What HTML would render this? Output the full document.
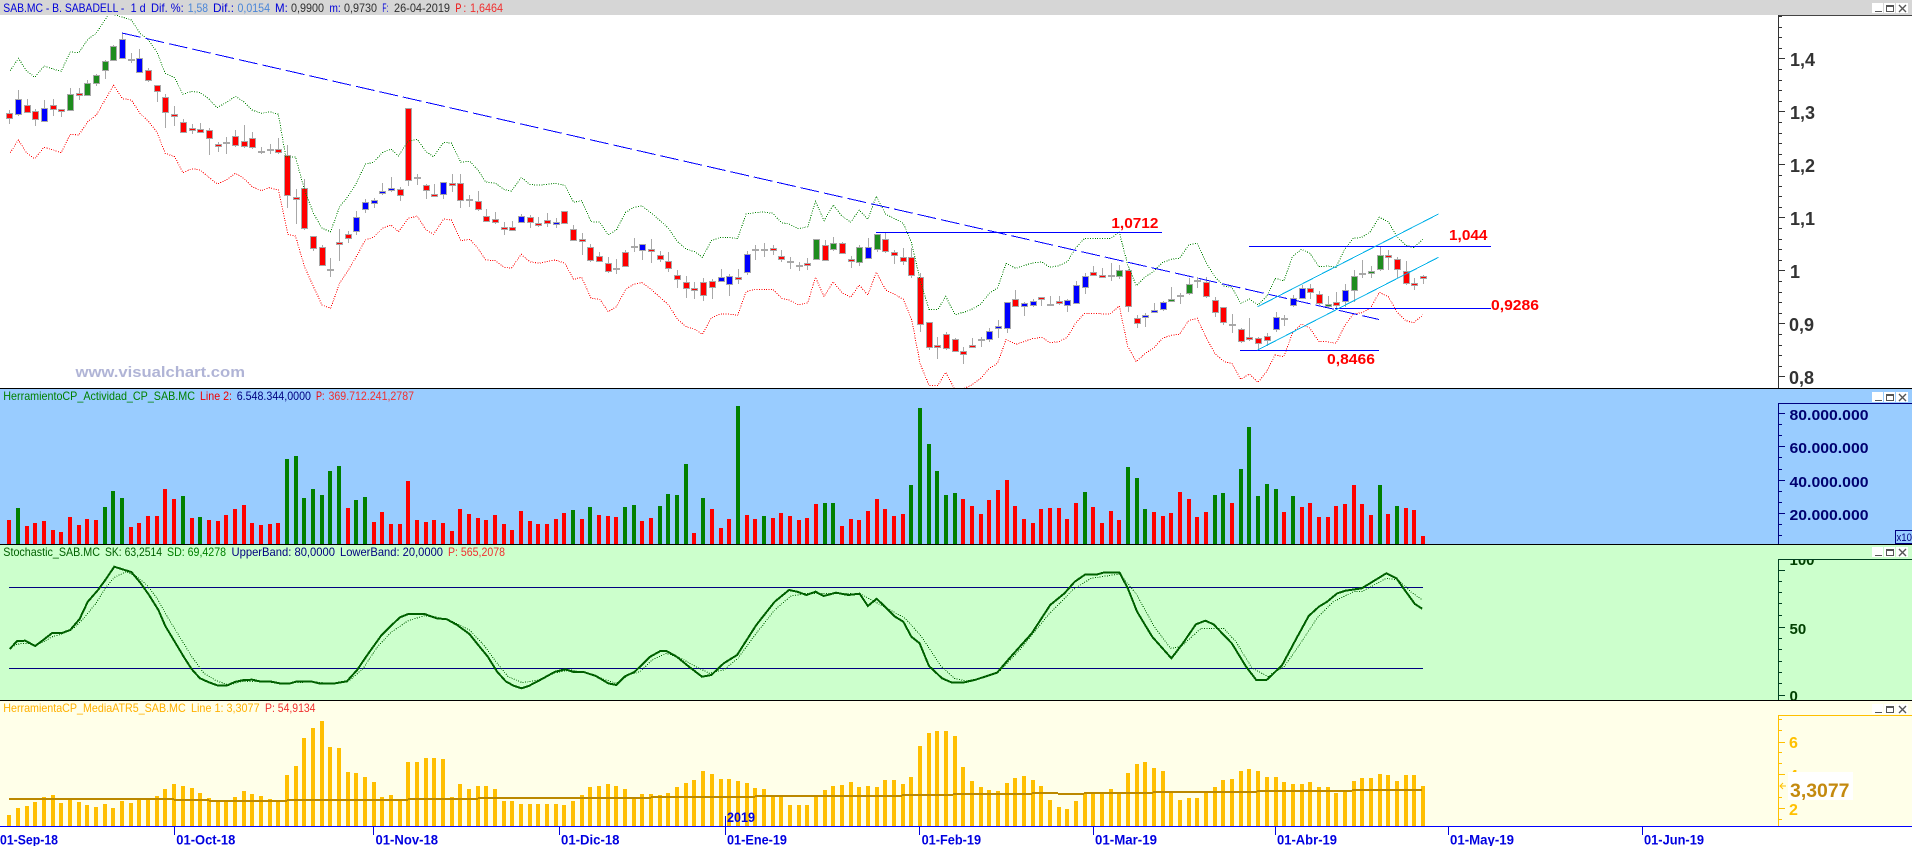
<!DOCTYPE html>
<html><head><meta charset="utf-8"><title>SAB.MC</title>
<style>
html,body{margin:0;padding:0;background:#fff;overflow:hidden}
svg{display:block}
text{font-family:"Liberation Sans",sans-serif}
.t{font-size:12px}
.a{font-size:18px;font-weight:bold;fill:#333}
.l{font-size:15px;font-weight:bold;fill:#f00}
.n{font-size:15px;font-weight:bold;fill:#000070}
.g{font-size:15px;font-weight:bold;fill:#004000}
.y{font-size:16px;font-weight:bold;fill:#ffc000}
.d{font-size:14px;font-weight:bold;fill:#0000e0}
</style></head><body>
<svg id="s" xmlns="http://www.w3.org/2000/svg" width="1912" height="846" viewBox="0 0 1912 846">
<defs><clipPath id="cg"><rect x="1779" y="560" width="133" height="140"/></clipPath></defs>
<rect width="1912" height="846" fill="#fff"/>
<g id="p1"></g>
<rect x="0" y="0" width="1912" height="15" fill="#d6d6d6"/>
<rect x="1778" y="15" width="134" height="1" fill="#444"/>
<g id="ax1"></g>
<text class="a" x="1790" y="66">1,4</text>
<text class="a" x="1790" y="119">1,3</text>
<text class="a" x="1790" y="172">1,2</text>
<text class="a" x="1790" y="225">1,1</text>
<text class="a" x="1790" y="278">1</text>
<text class="a" x="1789" y="331">0,9</text>
<text class="a" x="1789" y="384">0,8</text>
<text class="l" x="1111.4" y="228" textLength="47" lengthAdjust="spacingAndGlyphs">1,0712</text>
<text class="l" x="1449" y="240" textLength="38.5" lengthAdjust="spacingAndGlyphs">1,044</text>
<text class="l" x="1491" y="310" textLength="48" lengthAdjust="spacingAndGlyphs">0,9286</text>
<text class="l" x="1327" y="364" textLength="48" lengthAdjust="spacingAndGlyphs">0,8466</text>
<text x="75.5" y="377" font-size="15" font-weight="bold" fill="#b0b4d6" textLength="169.5" lengthAdjust="spacingAndGlyphs">www.visualchart.com</text>
<g class="t">
<text x="3.3" y="12" fill="#0000d8" textLength="121" lengthAdjust="spacingAndGlyphs">SAB.MC - B. SABADELL -</text>
<text x="130.6" y="12" fill="#0000d8" textLength="15" lengthAdjust="spacingAndGlyphs">1 d</text>
<text x="151" y="12" fill="#0000d8" textLength="32.7" lengthAdjust="spacingAndGlyphs">Dif. %:</text>
<text x="187.8" y="12" fill="#4a86d8" textLength="20.2" lengthAdjust="spacingAndGlyphs">1,58</text>
<text x="213" y="12" fill="#0000d8" textLength="21" lengthAdjust="spacingAndGlyphs">Dif.:</text>
<text x="237.5" y="12" fill="#4a86d8" textLength="32.5" lengthAdjust="spacingAndGlyphs">0,0154</text>
<text x="275" y="12" fill="#0000d8" textLength="12.8" lengthAdjust="spacingAndGlyphs">M:</text>
<text x="291" y="12" fill="#303030" textLength="33" lengthAdjust="spacingAndGlyphs">0,9900</text>
<text x="329.4" y="12" fill="#0000d8" textLength="11.4" lengthAdjust="spacingAndGlyphs">m:</text>
<text x="344" y="12" fill="#303030" textLength="33" lengthAdjust="spacingAndGlyphs">0,9730</text>
<text x="382.4" y="12" fill="#0000d8" textLength="6" lengthAdjust="spacingAndGlyphs">F:</text>
<text x="394" y="12" fill="#303030" textLength="56" lengthAdjust="spacingAndGlyphs">26-04-2019</text>
<text x="455.5" y="12" fill="#f00000" textLength="10.5" lengthAdjust="spacingAndGlyphs">P :</text>
<text x="470" y="12" fill="#f03030" textLength="33" lengthAdjust="spacingAndGlyphs">1,6464</text>
</g>

<rect x="0" y="388" width="1912" height="1" fill="#000"/>
<rect x="0" y="389" width="1912" height="155" fill="#99ccff"/>
<g id="p2"></g>
<g class="t">
<text x="3.3" y="400" fill="#008000" textLength="191.7" lengthAdjust="spacingAndGlyphs">HerramientoCP_Actividad_CP_SAB.MC</text>
<text x="200" y="400" fill="#f00000" textLength="32" lengthAdjust="spacingAndGlyphs">Line 2:</text>
<text x="236.7" y="400" fill="#000080" textLength="74.3" lengthAdjust="spacingAndGlyphs">6.548.344,0000</text>
<text x="316" y="400" fill="#f00000" textLength="8.5" lengthAdjust="spacingAndGlyphs">P:</text>
<text x="328.5" y="400" fill="#f03030" textLength="85.5" lengthAdjust="spacingAndGlyphs">369.712.241,2787</text>
</g>
<rect x="1778" y="403" width="134" height="1" fill="#000080"/>
<rect x="1778" y="403" width="1" height="141" fill="#000080"/>
<g id="ax2"></g>
<text class="n" x="1789.5" y="420" textLength="79" lengthAdjust="spacingAndGlyphs">80.000.000</text>
<text class="n" x="1789.5" y="453" textLength="79" lengthAdjust="spacingAndGlyphs">60.000.000</text>
<text class="n" x="1789.5" y="487" textLength="79" lengthAdjust="spacingAndGlyphs">40.000.000</text>
<text class="n" x="1789.5" y="520" textLength="79" lengthAdjust="spacingAndGlyphs">20.000.000</text>
<text class="n" x="1789.5" y="554">0</text>
<rect x="1895.5" y="530.5" width="17" height="13" fill="#99ccff" stroke="#000080"/>
<text x="1896.5" y="541" font-size="11" fill="#000080" textLength="15.5" lengthAdjust="spacingAndGlyphs">x10</text>

<rect x="0" y="544" width="1912" height="1" fill="#000"/>
<rect x="0" y="545" width="1912" height="155" fill="#ccffcc"/>
<g id="p3"></g>
<g class="t">
<text x="3.3" y="556" fill="#006000" textLength="96.7" lengthAdjust="spacingAndGlyphs">Stochastic_SAB.MC</text>
<text x="105" y="556" fill="#006000" textLength="57" lengthAdjust="spacingAndGlyphs">SK: 63,2514</text>
<text x="167" y="556" fill="#008000" textLength="59" lengthAdjust="spacingAndGlyphs">SD: 69,4278</text>
<text x="231.5" y="556" fill="#000080" textLength="103.5" lengthAdjust="spacingAndGlyphs">UpperBand: 80,0000</text>
<text x="340" y="556" fill="#000080" textLength="103" lengthAdjust="spacingAndGlyphs">LowerBand: 20,0000</text>
<text x="448" y="556" fill="#f03030" textLength="57" lengthAdjust="spacingAndGlyphs">P: 565,2078</text>
</g>
<rect x="1778" y="559" width="134" height="1" fill="#004020"/>
<rect x="1778" y="559" width="1" height="141" fill="#004020"/>
<g id="ax3"></g>
<g clip-path="url(#cg)">
<text class="g" x="1789.5" y="565">100</text>
<text class="g" x="1789.5" y="634">50</text>
<text class="g" x="1789.5" y="701">0</text>
</g>

<rect x="0" y="700" width="1912" height="1" fill="#000"/>
<rect x="0" y="701" width="1912" height="125" fill="#ffffe9"/>
<g id="p4"></g>
<g class="t">
<text x="3.3" y="712" fill="#ffb000" textLength="182.4" lengthAdjust="spacingAndGlyphs">HerramientaCP_MediaATR5_SAB.MC</text>
<text x="191" y="712" fill="#ffb000" textLength="68.6" lengthAdjust="spacingAndGlyphs">Line 1: 3,3077</text>
<text x="265" y="712" fill="#f03030" textLength="50.5" lengthAdjust="spacingAndGlyphs">P: 54,9134</text>
</g>
<rect x="1778" y="715" width="134" height="1" fill="#ffc000"/>
<rect x="1778" y="715" width="1" height="111" fill="#ffc000"/>
<g id="ax4"></g>
<path d="M1786 786H1780M1783 783L1780 786L1783 789" fill="none" stroke="#ffc000"/>
<text class="y" x="1789" y="748">6</text>
<text class="y" x="1789" y="781">4</text>
<text class="y" x="1789" y="815">2</text>
<rect x="1788" y="772" width="65" height="28" fill="#fff"/>
<text x="1790" y="797" font-size="19" font-weight="bold" fill="#c48a10" textLength="59.5" lengthAdjust="spacingAndGlyphs">3,3077</text>

<rect x="0" y="826" width="1912" height="1" fill="#0000ff"/>
<g fill="#0000e0">
<rect x="174" y="827" width="1" height="8"/><rect x="373" y="827" width="1" height="8"/><rect x="559" y="827" width="1" height="8"/>
<rect x="725" y="816" width="1" height="19"/><rect x="919" y="827" width="1" height="8"/><rect x="1093" y="827" width="1" height="8"/>
<rect x="1275" y="827" width="1" height="8"/><rect x="1448" y="827" width="1" height="8"/><rect x="1642" y="827" width="1" height="8"/>
</g>
<text class="d" x="0" y="844.5" textLength="58" lengthAdjust="spacingAndGlyphs">01-Sep-18</text>
<text class="d" x="176.3" y="844.5" textLength="59" lengthAdjust="spacingAndGlyphs">01-Oct-18</text>
<text class="d" x="375.5" y="844.5" textLength="62.5" lengthAdjust="spacingAndGlyphs">01-Nov-18</text>
<text class="d" x="561" y="844.5" textLength="58.5" lengthAdjust="spacingAndGlyphs">01-Dic-18</text>
<text class="d" x="727" y="844.5" textLength="60" lengthAdjust="spacingAndGlyphs">01-Ene-19</text>
<text class="d" x="727" y="822" textLength="28" lengthAdjust="spacingAndGlyphs">2019</text>
<text class="d" x="921.6" y="844.5" textLength="59.5" lengthAdjust="spacingAndGlyphs">01-Feb-19</text>
<text class="d" x="1095" y="844.5" textLength="62" lengthAdjust="spacingAndGlyphs">01-Mar-19</text>
<text class="d" x="1277" y="844.5" textLength="60" lengthAdjust="spacingAndGlyphs">01-Abr-19</text>
<text class="d" x="1450" y="844.5" textLength="64" lengthAdjust="spacingAndGlyphs">01-May-19</text>
<text class="d" x="1644" y="844.5" textLength="60" lengthAdjust="spacingAndGlyphs">01-Jun-19</text>
<g id="btn"></g>
</svg>
<script>
(function(){
var NS="http://www.w3.org/2000/svg";
function el(par,n,a){var e=document.createElementNS(NS,n);for(var k in a)e.setAttribute(k,a[k]);document.getElementById(par).appendChild(e);return e;}
function R(par,x,y,w,h,f){el(par,"rect",{x:x,y:y,width:w,height:h,fill:f,"shape-rendering":"crispEdges"});}
function X(i){return Math.round(9.4+8.672*i);}
function pts(x0,y0,a){var o=[];for(var i=0;i<a.length;i+=2)o.push((x0+a[i]/2.45).toFixed(1)+","+(y0+a[i+1]/3).toFixed(1));return o.join(" ");}
function poly(par,s,c,w,dash){var a={points:s,fill:"none",stroke:c,"stroke-width":w,"shape-rendering":"crispEdges"};if(dash)a["stroke-dasharray"]=dash;el(par,"polyline",a);}

/* candles: colour high top bottom low, in zoom-y units (px*3) */
var C="r 330 340 358 372|b 270 298 347 347|r 297 314 337 337|r 328 332 359 380|b 300 323 364 365|r 297 314 328 347|r 328 328 337 353|g 265 281 331 331|r 265 278 284 302|g 240 248 286 287|g 222 224 250 258|g 180 184 214 236|g 136 137 182 182|b 100 116 175 178|a 160 181 181 190|b 148 173 217 217|r 205 209 241 248|r 254 254 274 305|r 283 292 340 386|r 318 341 349 378|r 357 367 400 400|r 372 383 387 403|r 369 386 397 400|r 384 389 415 465|r 427 431 436 456|a 411 428 428 461|r 390 407 436 442|r 375 422 439 445|r 396 413 442 448|a 440 455 455 462|a 432 449 449 462|r 414 446 457 462|r 435 464 587 624|r 567 590 598 672|r 538 563 686 690|r 707 707 745 752|r 736 742 799 799|a 775 809 809 833|r 687 727 736 782|r 693 701 715 728|b 633 650 694 705|b 597 607 631 638|b 593 599 610 624|b 549 572 577 585|b 532 563 571 578|r 562 566 586 605|r 323 323 541 558|a 521 533 533 553|r 552 556 574 597|r 552 581 589 592|b 545 545 583 595|r 522 548 556 576|r 522 550 604 624|a 585 600 600 620|r 574 604 631 634|r 628 647 665 668|r 636 656 667 672|r 665 680 684 705|r 662 680 691 693|b 643 647 667 668|r 645 650 667 684|r 652 668 674 681|r 640 659 670 682|b 655 665 669 684|r 632 632 670 670|r 675 686 721 722|r 698 716 720 765|r 733 740 781 788|r 757 767 784 788|r 771 789 817 818|a 777 806 806 822|r 750 755 799 800|a 714 741 741 755|b 733 733 755 780|r 717 748 754 790|r 752 766 781 785|r 755 782 805 815|r 810 826 841 864|r 828 845 865 893|r 845 863 870 895|r 835 845 888 905|r 838 842 862 898|b 807 830 844 846|b 823 827 855 888|r 808 832 840 852|b 752 761 817 824|a 735 751 751 780|a 730 751 751 771|r 735 743 753 765|r 750 767 780 787|a 770 785 785 805|a 785 798 798 813|r 775 788 796 810|g 718 718 781 781|r 720 734 781 782|g 712 730 751 755|r 726 728 760 762|r 768 776 785 803|g 735 742 790 797|b 714 740 775 775|g 703 703 751 756|r 700 718 757 760|r 750 755 768 792|r 745 770 784 795|r 745 772 829 835|r 820 830 973 998|r 965 965 1042 1048|r 1010 1034 1042 1075|r 995 1003 1047 1050|r 1015 1016 1054 1055|r 1040 1052 1063 1090|r 1015 1034 1039 1045|a 1010 1021 1021 1040|b 985 992 1018 1027|b 960 977 981 1013|b 905 905 985 997|r 870 896 919 922|b 905 908 921 948|b 898 902 916 922|r 890 892 897 918|a 888 914 914 918|r 888 902 912 915|b 898 899 918 936|b 843 854 912 913|b 820 827 864 882|r 798 815 826 828|r 803 824 829 830|a 790 829 829 845|g 795 809 829 838|r 808 809 921 938|r 945 953 970 983|b 938 944 954 980|b 910 929 933 938|b 903 906 931 932|g 860 896 903 905|a 880 889 889 912|g 833 852 883 884|a 830 843 843 864|r 830 845 891 893|r 890 899 937 950|r 920 921 970 975|a 942 975 975 998|r 985 986 1024 1030|r 953 1010 1017 1022|r 1011 1014 1033 1050|r 1000 1007 1021 1038|b 937 950 990 997|a 945 956 956 978|b 885 893 918 920|b 855 863 895 897|r 852 863 877 897|r 873 881 912 914|g 888 911 918 925|r 876 905 918 930|b 852 869 904 920|g 810 827 873 905|a 780 822 822 835|g 798 812 822 835|g 740 764 810 812|r 750 765 774 810|r 772 776 810 835|r 783 813 853 855|r 835 848 856 870|r 825 827 831 852".split("|");
var col={r:"#ff0000",b:"#0000ff",g:"#1e8c1e"},GR="#a8a8a8";
C.forEach(function(s,i){
 var p=s.split(" "),c=p[0],h=+p[1]/3,t=+p[2]/3,b=+p[3]/3,l=+p[4]/3,x=X(i);
 R("p1",x,Math.round(h),1,Math.max(1,Math.round(l-h)),GR);
 if(c==="a"){R("p1",x-3,Math.round(t)-1,7,2,GR);}
 else{
  var T=Math.round(t),H=Math.max(3,Math.round(b-t));
  R("p1",x-3,T,7,H,GR);
  R("p1",x-2,T+1,5,H-2,col[c]);
 }
});

/* upper and lower bands */
var gU=pts(0,0,[25,212,45,175,65,212,85,232,108,198,130,207,150,214,172,156,193,158,215,118,236,100,265,45,270,40,296,50,322,60,343,100,364,120,384,155,405,220,428,233,448,283,470,274,490,278,510,295,532,323,555,307,577,289,597,305,618,330,640,340,660,335,682,343,700,470,724,471,746,570,768,640,789,685,810,695,832,620,851,592,873,550,895,492,915,487,937,458,958,447,976,468,1000,423,1022,418,1044,455,1062,470,1087,427,1106,429,1129,487,1151,484,1171,510,1190,546,1214,550,1235,568,1253,574,1277,532,1298,553,1320,556,1361,550,1384,556,1405,607,1425,602,1448,665,1470,667,1490,705,1510,690,1533,637,1553,622])+" "+pts(640,0,[5,618,29,640,70,685,92,725,113,747,134,755,153,772,175,722,197,712,218,712,239,716,260,642,281,638,302,636,325,640,347,668,365,672,388,686,411,680,430,604,451,662,473,615,495,648,516,667,537,630,558,658,579,589,602,643,622,655,645,670,666,730,686,840,708,928,730,928,749,889,772,944,793,937,813,928,835,912,856,880,876,864,897,790,921,805,940,797,961,789,985,786,1004,802,1026,797,1047,785,1067,745,1089,715,1112,715,1152,716,1174,696,1195,795,1216,857,1238,830,1258,815,1280,788,1301,778,1322,775,1344,735,1365,730,1386,785,1408,830,1431,858,1450,862,1472,910,1493,897,1514,915,1535,890,1557,835])+" "+pts(1272,0,[8,835,29,843,50,770,72,748,93,760,115,800,136,798,157,802,177,750,199,715,220,712,241,695,263,652,285,665,306,710,327,735,347,743,370,718]);
var rL=pts(0,0,[25,458,45,420,65,458,85,476,108,442,130,450,150,458,172,403,193,405,215,365,236,345,278,256,300,296,322,300,343,340,364,365,384,395,405,460,428,470,448,518,470,506,490,510,510,530,532,552,555,540,577,520,597,535,618,560,640,572,660,563,682,570,705,703,724,708,746,800,768,860,789,915,810,925,832,850,851,815,873,770,895,720,915,712,937,685,958,675,976,695,1000,655,1022,648,1044,690,1062,703,1087,657,1106,660,1129,722,1151,718,1171,745,1190,780,1214,782,1235,802,1253,805,1277,763,1298,785,1320,790,1361,780,1384,790,1405,838,1425,832,1448,895,1470,898,1490,935,1510,920,1533,868,1553,852])+" "+pts(640,0,[5,848,29,870,70,915,92,958,113,980,134,988,153,1003,175,953,197,942,218,942,239,946,260,875,281,868,325,868,347,895,365,900,388,914,411,908,430,832,451,890,473,845,495,878,516,892,537,855,558,885,579,817,602,870,622,882,645,898,666,960,686,1090,708,1156,730,1156,749,1117,772,1170,793,1166,813,1155,835,1135,856,1105,876,1090,897,1018,921,1033,940,1025,961,1016,985,1012,1004,1028,1026,1025,1047,1012,1067,970,1089,940,1152,942,1174,918,1195,1040,1216,1085,1238,1060,1258,1045,1280,1015,1301,1006,1322,1003,1344,962,1365,955,1386,1010,1408,1060,1431,1085,1450,1090,1472,1138,1493,1122,1514,1147,1535,1115,1557,1062])+" "+pts(1272,0,[8,1065,29,1070,50,1000,72,972,93,985,115,1025,136,1025,157,1030,177,980,199,942,220,938,241,925,263,877,285,890,306,935,327,962,347,968,370,945]);
poly("p1",gU,"#008000",1,"1 1.4");
poly("p1",rL,"#ff0000",1,"1 1.4");

/* trend lines */
function ln(par,a,b,c,d,col,dash,w){var o={x1:a,y1:b,x2:c,y2:d,stroke:col,"stroke-width":w||1,"shape-rendering":"crispEdges"};if(dash)o["stroke-dasharray"]=dash;el(par,"line",o);}
ln("p1",122,33,1379,319.5,"#0000ff","19 5");
ln("p1",876,232.5,1162,232.5,"#0000ff");
ln("p1",1249,246.5,1491,246.5,"#0000ff");
ln("p1",1335,308.5,1491,308.5,"#0000ff");
ln("p1",1240,350.5,1379,350.5,"#0000ff");
ln("p1",1257.6,306.7,1438.5,214,"#00b0e8");
ln("p1",1257.6,350,1438.5,257.3,"#00b0e8");

/* axis 1 ticks */
for(var k=-4;k<31;k++){var y=Math.round(58.3+10.6*k);if(y<16||y>387)continue;R("ax1",1778,y,((k%5)===0)?7:4,1,"#333");}
R("ax1",1778,15,1,373,"#333");
/* axis 2 ticks */
[100,133,166,199,232,266,300,333,367,400,433,466].forEach(function(z,i){R("ax2",1778,Math.round(380+z/3),i%3===0?7:4,1,"#000080");});
/* axis 3 ticks */
[570,603,637,670,704,742,775,808,842,875,908,945].forEach(function(z){R("ax3",1778,Math.round(380+z/3),(z==742||z==945||z==570)?7:4,1,"#004020");});
/* axis 4 ticks */
[719,730,742,752,763,774,797,808,819].forEach(function(y){R("ax4",1778,y,(y==742||y==774||y==808)?7:4,1,"#ffc000");});

/* volume */
var V="r420 g384 r438 r429 r423 r450 r456 r411 r435 r417 r420 g381 g333 g354 r441 r429 r408 r408 r327 r357 g348 r414 g411 r420 r423 r405 r387 r375 r429 r435 r432 r429 g237 g228 g354 g327 g345 g273 g258 r384 g360 g351 r426 r396 r432 r432 r303 r420 r426 r420 r429 r453 r387 r402 r414 r420 r405 r432 r450 r393 r423 r432 r432 r417 r399 g390 r417 g381 r405 r408 r411 g381 g375 r423 r414 g378 g342 g345 g252 r459 g354 r387 r444 r417 g78 r405 r417 g408 r414 r399 r408 r420 r414 r372 g369 g369 r438 r417 r420 r393 r357 r387 r408 r402 g315 g84 g192 g273 g345 g339 r357 r378 r402 r360 r330 r300 r378 r417 r429 r387 r384 r384 r417 r369 g336 r381 r429 r393 r420 g261 g294 g387 r396 r408 r399 r336 r357 r411 r396 g345 g339 r369 g267 g141 g348 g312 g327 r396 g348 r381 r369 r411 r411 r378 r372 r315 r372 r405 g315 r402 g378 r384 r390 r468".split(" ");
V.forEach(function(s,i){var y=Math.round(380+ +s.slice(1)/3);R("p2",X(i)-2,y,4,544-y,s[0]==="r"?"#ff0000":"#008000");});

/* stochastic */
R("p3",9,587,1414,1,"#000080");
R("p3",9,668,1414,1,"#000080");
var sk=pts(0,380,[24,807,42,783,62,782,86,798,108,778,128,759,152,759,172,750,195,717,215,665,240,630,258,600,280,560,300,568,322,576,345,610,365,645,388,690,405,738,428,785,450,830,470,868,490,895,510,906,532,916,555,917,575,906,597,900,618,899,640,905,665,905,690,911,708,911,725,905,765,905,785,911,815,911,850,904,875,870,900,825,935,765,960,735,980,712,1000,702,1040,702,1070,715,1095,718,1120,735,1150,762,1175,800,1195,830,1218,875,1240,905,1260,918,1278,925,1295,918,1320,902,1360,875,1385,868,1405,876,1430,876,1460,888,1490,910,1510,915,1530,890,1555,875])+" "+pts(640,380,[0,860,25,830,50,813,65,813,90,830,120,860,152,890,175,885,205,850,238,825,285,735,330,665,365,630,385,635,408,645,430,635,450,648,480,638,510,645,538,641,558,678,580,656,625,710,645,725,665,770,685,790,708,858,740,895,765,908,790,908,820,900,875,878,905,835,960,760,1005,675,1040,640,1065,605,1090,584,1118,584,1135,578,1175,578,1195,625,1218,695,1255,770,1302,835,1330,790,1362,733,1385,722,1405,733,1450,790,1485,860,1510,900,1535,900])+" "+pts(1272,380,[0,885,25,855,60,775,90,708,115,680,135,665,160,640,180,632,220,625,240,610,280,580,305,595,325,630,350,672,368,686]);
var sd=pts(0,380,[24,805,42,792,65,790,86,796,108,785,128,770,152,762,180,745,205,715,235,670,258,625,280,592,310,575,335,590,360,615,385,655,410,710,440,770,470,830,500,880,530,902,560,915,590,905,640,905,700,910,765,905,815,911,855,903,890,865,925,800,960,755,1000,722,1040,707,1070,712,1110,725,1150,750,1185,795,1215,845,1245,890,1280,908,1320,900,1360,878,1400,870,1440,880,1480,898,1510,910,1540,885])+" "+pts(640,380,[0,875,30,840,65,820,100,835,140,862,170,880,205,870,240,835,285,760,330,690,370,648,410,640,480,640,540,642,580,668,650,715,690,770,735,855,770,895,800,903,850,890,880,875,930,810,1000,705,1060,630,1105,595,1175,582,1215,640,1260,740,1300,805,1325,800,1375,745,1430,745,1460,785,1500,865,1540,890])+" "+pts(1272,380,[0,880,30,860,70,790,110,715,150,665,200,635,220,635,280,595,310,600,340,635,368,660]);
poly("p3",sd,"#006000",1,"1 1.4");
poly("p3",sk,"#006000",2);

/* ATR */
var A=[1305,1284,1278,1266,1251,1245,1269,1257,1266,1275,1281,1272,1284,1263,1269,1257,1257,1248,1227,1212,1218,1224,1239,1254,1263,1263,1251,1233,1242,1248,1257,1263,1185,1158,1074,1044,1023,1101,1104,1176,1179,1191,1206,1251,1245,1260,1146,1146,1134,1134,1137,1251,1212,1227,1218,1218,1227,1263,1263,1272,1272,1272,1272,1272,1275,1263,1245,1221,1218,1212,1218,1227,1251,1242,1242,1245,1239,1221,1209,1200,1173,1182,1197,1197,1203,1209,1224,1227,1248,1248,1275,1275,1275,1248,1230,1218,1215,1206,1221,1218,1221,1200,1200,1212,1191,1098,1059,1053,1053,1068,1161,1203,1221,1230,1233,1209,1194,1188,1200,1218,1260,1281,1287,1263,1239,1239,1239,1227,1239,1179,1152,1146,1164,1173,1236,1260,1254,1254,1236,1221,1200,1197,1173,1167,1173,1191,1191,1206,1212,1212,1206,1221,1221,1239,1233,1203,1194,1194,1182,1185,1203,1185,1185,1218];
A.forEach(function(z,i){var y=Math.round(380+z/3);R("p4",X(i)-2,y,4,826-y,"#ffbf00");});
var S=[[22,427,1257,0],[427,512,1260,0],[512,702,1263,0],[702,1000,1260,0],[1000,1170,1257,0],[1170,1568,1254,0],[0,28,1254,640],[28,282,1251,640],[282,642,1248,640],[642,768,1245,640],[768,960,1242,640],[960,1024,1239,640],[1024,1088,1242,640],[1088,1257,1239,640],[1257,1512,1236,640],[1512,1568,1233,640],[0,197,1233,1272],[197,367,1230,1272]];
S.forEach(function(s){var a=Math.round(s[3]+s[0]/2.45),b=Math.round(s[3]+s[1]/2.45);R("p4",a,Math.round(380+s[2]/3)-1,b-a,2,"#bb8800");});

/* window buttons */
[[3,"#fff"],[392,"#fff"],[547,"#fff"],[704,"#fff"]].forEach(function(q){
 var y=q[0];
 R("btn",1872,y,11,10,"#fff");R("btn",1884,y,11,10,"#fff");R("btn",1896,y,12,10,"#fff");
 R("btn",1875,y+8,7,1,"#555");
 R("btn",1886,y+2,8,2,"#555");R("btn",1886,y+8,8,1,"#555");R("btn",1886,y+2,1,7,"#555");R("btn",1893,y+2,1,7,"#555");
 el("btn","path",{d:"M1899 "+(y+2)+"L1906 "+(y+9)+"M1906 "+(y+2)+"L1899 "+(y+9),stroke:"#555","stroke-width":1.4,fill:"none"});
});
})();
</script>
</body></html>
